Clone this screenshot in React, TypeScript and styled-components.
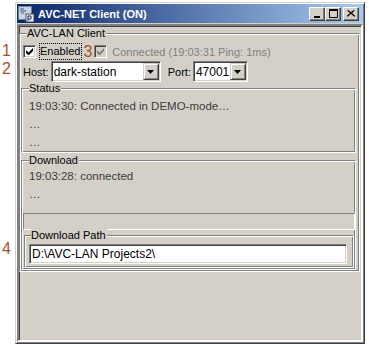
import styled, { createGlobalStyle } from 'styled-components'

const Global = createGlobalStyle`
  body {
    margin: 0;
    background: #ffffff;
    font-family: "Liberation Sans", Arial, sans-serif;
    font-size: 11px;
  }
`

const face = '#d4d0c8'

const Page = styled.div`
  position: relative;
  width: 369px;
  height: 348px;
  padding: 2px 0 0 15px;
  box-sizing: border-box;
`

const Marker = styled.div<{ $top: number }>`
  position: absolute;
  left: 2px;
  top: ${p => p.$top}px;
  font-size: 16px;
  line-height: 16px;
  color: #a5512b;
`

const Window = styled.div`
  width: 350px;
  height: 342px;
  box-sizing: border-box;
  background: ${face};
  border: 1px solid;
  border-color: ${face} #404040 #404040 ${face};
  box-shadow: inset 1px 1px #fff, inset -1px -1px #808080;
  padding: 1px;
  display: flex;
  flex-direction: column;
`

const TitleBar = styled.div`
  height: 19px;
  display: flex;
  align-items: center;
  padding-left: 1px;
  background: linear-gradient(to right, #0a246a, #a6caf0);
  color: #fff;
  font-weight: bold;
  font-size: 11px;
`

const Title = styled.span`
  margin-left: 4px;
  flex: 1;
`

const CaptionButton = styled.div<{ $gap?: number }>`
  width: 16px;
  height: 14px;
  box-sizing: border-box;
  margin-left: ${p => p.$gap ?? 0}px;
  background: ${face};
  border: 1px solid;
  border-color: #fff #404040 #404040 #fff;
  box-shadow: inset -1px -1px #808080;
  display: flex;
  align-items: center;
  justify-content: center;
  &:last-child {
    margin-right: 4px;
  }
`

const Client = styled.div`
  flex: 1;
  margin-top: 1px;
  border: 2px solid;
  border-color: #808080 #fff #fff #808080;
  box-shadow: inset 1px 1px #404040, inset -1px -1px ${face};
  padding: 0;
`

const Group = styled.div<{ $pad: string; $margin: string }>`
  position: relative;
  margin: ${p => p.$margin};
  padding: ${p => p.$pad};
  border: 1px solid;
  border-color: #808080 #fff #fff #808080;
  box-shadow: inset 1px 1px #fff, inset -1px -1px #808080;
`

const Legend = styled.span<{ $left: number }>`
  position: absolute;
  top: -7px;
  left: ${p => p.$left}px;
  background: ${face};
  padding: 0 1px 0 0;
  line-height: 13px;
  color: #000;
`

const Row = styled.div<{ $h: number }>`
  display: flex;
  align-items: center;
  height: ${p => p.$h}px;
`

const Box = styled.div<{ $disabled?: boolean; $ml: number }>`
  width: 13px;
  height: 13px;
  box-sizing: border-box;
  margin-left: ${p => p.$ml}px;
  border: 1px solid;
  border-color: #808080 #fff #fff #808080;
  box-shadow: inset 1px 1px #404040, inset -1px -1px ${face};
  background: ${p => (p.$disabled ? face : '#fff')};
  display: flex;
  align-items: center;
  justify-content: center;
`

const Focus = styled.span`
  margin-left: 3px;
  padding: 1px 1px 1px 0;
  border: 1px dotted #000;
  line-height: 13px;
`

const Three = styled.span`
  margin-left: 1px;
  font-size: 16px;
  line-height: 16px;
  color: #a5512b;
`

const Muted = styled.span`
  margin-left: 5px;
  color: #808080;
`

const Label = styled.span<{ $ml: number }>`
  margin-left: ${p => p.$ml}px;
`

const Combo = styled.div<{ $w: number }>`
  width: ${p => p.$w}px;
  height: 21px;
  box-sizing: border-box;
  margin-left: 2px;
  border: 1px solid;
  border-color: #808080 #fff #fff #808080;
  box-shadow: inset 1px 1px #404040, inset -1px -1px ${face};
  background: #fff;
  display: flex;
  align-items: center;
  padding: 1px;
`

const ComboText = styled.span`
  flex: 1;
  padding-left: 1px;
  font-size: 12px;
`

const DropButton = styled.div`
  width: 16px;
  height: 17px;
  box-sizing: border-box;
  background: ${face};
  border: 1px solid;
  border-color: ${face} #404040 #404040 ${face};
  box-shadow: inset 1px 1px #fff, inset -1px -1px #808080;
  display: flex;
  align-items: center;
  justify-content: center;
`

const Line = styled.div`
  height: 18px;
  line-height: 18px;
  padding-left: 7px;
  color: #3c3c3c;
  font-size: 11.5px;
`

const Panel = styled.div`
  height: 17px;
  box-sizing: border-box;
  margin: 10px 0 0 1px;
  border: 1px solid;
  border-color: #808080 #fff #fff #808080;
`

const TextBox = styled.div`
  height: 20px;
  width: 318px;
  box-sizing: border-box;
  border: 1px solid;
  border-color: #808080 #fff #fff #808080;
  box-shadow: inset 1px 1px #404040, inset -1px -1px ${face};
  background: #fff;
  padding: 0 2px;
  line-height: 18px;
  font-size: 12px;
`

function Check({ disabled, ml }: { disabled?: boolean; ml: number }) {
  return (
    <Box $disabled={disabled} $ml={ml}>
      <svg width="7" height="7" viewBox="0 0 7 7">
        <path d="M0 2v3l2 2h1l4-4V0L2.5 4.5z" fill={disabled ? '#808080' : '#000'} />
      </svg>
    </Box>
  )
}

function Arrow() {
  return (
    <svg width="7" height="4" viewBox="0 0 7 4">
      <path d="M0 0h7L3.5 4z" fill="#000" />
    </svg>
  )
}

function AppIcon() {
  return (
    <svg width="16" height="16" viewBox="0 0 16 16">
      <rect x="0.5" y="0.5" width="13" height="13" fill="#c8d4e4" stroke="#6b7f99" />
      <path d="M2 3h4M2 5h6M3 7h3" stroke="#3d5a9a" />
      <rect x="8" y="8" width="8" height="8" fill="#e8ecf0" stroke="#555" />
      <path d="M10 10h3v3h-3zM10 13v2" stroke="#1a2a6a" fill="none" />
    </svg>
  )
}

export default function App() {
  return (
    <Page>
      <Global />
      <Marker $top={43}>1</Marker>
      <Marker $top={61}>2</Marker>
      <Marker $top={241}>4</Marker>
      <Window>
        <TitleBar>
          <AppIcon />
          <Title>AVC-NET Client (ON)</Title>
          <CaptionButton>
            <svg width="8" height="8" viewBox="0 0 8 8">
              <rect x="1" y="6" width="6" height="2" fill="#000" />
            </svg>
          </CaptionButton>
          <CaptionButton>
            <svg width="9" height="9" viewBox="0 0 9 9">
              <path d="M0.5 1.5h8v7h-8z" stroke="#000" fill="none" />
              <rect x="0" y="0" width="9" height="2" fill="#000" />
            </svg>
          </CaptionButton>
          <CaptionButton $gap={2}>
            <svg width="8" height="7" viewBox="0 0 8 7">
              <path d="M0.5 0.5l7 6M7.5 0.5l-7 6M1.5 0.5l7 6M6.5 0.5l-7 6" stroke="#000" />
            </svg>
          </CaptionButton>
        </TitleBar>
        <Client>
          <Group $margin="7px 1px 0 0" $pad="9px 3px 1px 1px">
            <Legend $left={7}>AVC-LAN Client</Legend>
            <Row $h={17}>
              <Check ml={2} />
              <Focus>Enabled</Focus>
              <Three>3</Three>
              <Check disabled ml={2} />
              <Muted>Connected (19:03:31 Ping: 1ms)</Muted>
            </Row>
            <Row $h={21} style={{ marginTop: 1 }}>
              <Label $ml={2}>Host:</Label>
              <Combo $w={110}>
                <ComboText>dark-station</ComboText>
                <DropButton><Arrow /></DropButton>
              </Combo>
              <Label $ml={7}>Port:</Label>
              <Combo $w={55}>
                <ComboText>47001</ComboText>
                <DropButton><Arrow /></DropButton>
              </Combo>
            </Row>
            <Group $margin="6px 0 0 0" $pad="8px 0 1px 0">
              <Legend $left={7}>Status</Legend>
              <Line>19:03:30: Connected in DEMO-mode…</Line>
              <Line>…</Line>
              <Line>…</Line>
            </Group>
            <Group $margin="7px 0 0 0" $pad="6px 0 1px 0">
              <Legend $left={7}>Download</Legend>
              <Line>19:03:28: connected</Line>
              <Line>…</Line>
              <Panel />
              <Group $margin="5px 1px 0 2px" $pad="8px 0 3px 4px">
                <Legend $left={6}>Download Path</Legend>
                <TextBox>D:\AVC-LAN Projects2\</TextBox>
              </Group>
            </Group>
          </Group>
        </Client>
      </Window>
    </Page>
  )
}
